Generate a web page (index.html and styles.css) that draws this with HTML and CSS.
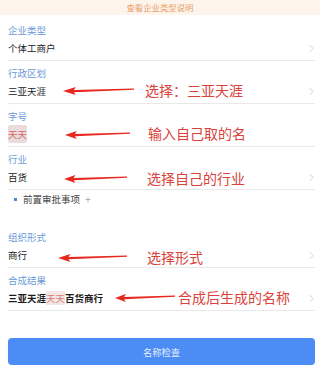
FILE: index.html
```html
<!DOCTYPE html>
<html lang="zh-CN">
<head>
<meta charset="utf-8">
<title>名称检查</title>
<link rel="stylesheet" href="styles.css">
</head>
<body>
<div class="header">查看企业类型说明</div>
<div class="form">
  <div class="field first">
    <div class="label">企业类型</div>
    <div class="value"><span>个体工商户</span><svg class="chev" viewBox="0 0 6 10"><path d="M1 1 L5 5 L1 9" /></svg></div>
  </div>
  <div class="field">
    <div class="label">行政区划</div>
    <div class="value"><span>三亚天涯</span>
      <svg class="arrow a1" viewBox="0 0 72 9" preserveAspectRatio="none"><polygon points="0,5 13,1 11,4 72,2.6 72,3.8 11,6.2 13,9"/></svg>
      <span class="note n1">选择：三亚天涯</span>
      <svg class="chev" viewBox="0 0 6 10"><path d="M1 1 L5 5 L1 9" /></svg></div>
  </div>
  <div class="field">
    <div class="label">字号</div>
    <div class="value"><span class="blur">天天</span>
      <svg class="arrow a2" viewBox="0 0 72 9" preserveAspectRatio="none"><polygon points="0,5 13,1 11,4 72,2.6 72,3.8 11,6.2 13,9"/></svg>
      <span class="note n2">输入自己取的名</span></div>
  </div>
  <div class="field">
    <div class="label">行业</div>
    <div class="value"><span>百货</span>
      <svg class="arrow a3" viewBox="0 0 72 9" preserveAspectRatio="none"><polygon points="0,5 13,1 11,4 72,2.6 72,3.8 11,6.2 13,9"/></svg>
      <span class="note n3">选择自己的行业</span>
      <svg class="chev" viewBox="0 0 6 10"><path d="M1 1 L5 5 L1 9" /></svg></div>
  </div>
  <div class="approval"><span class="dot"></span><span>前置审批事项</span><span class="plus">+</span></div>
  <div class="field gap">
    <div class="label">组织形式</div>
    <div class="value"><span>商行</span>
      <svg class="arrow a4" viewBox="0 0 72 9" preserveAspectRatio="none"><polygon points="0,5 13,1 11,4 72,2.6 72,3.8 11,6.2 13,9"/></svg>
      <span class="note n4">选择形式</span>
      <svg class="chev" viewBox="0 0 6 10"><path d="M1 1 L5 5 L1 9" /></svg></div>
  </div>
  <div class="field">
    <div class="label">合成结果</div>
    <div class="value"><span class="result">三亚天涯<span class="blur2">天天</span>百货商行</span>
      <svg class="arrow a5" viewBox="0 0 72 9" preserveAspectRatio="none"><polygon points="0,5 13,1 11,4 72,2.6 72,3.8 11,6.2 13,9"/></svg>
      <span class="note n5">合成后生成的名称</span>
      <svg class="chev" viewBox="0 0 6 10"><path d="M1 1 L5 5 L1 9" /></svg></div>
  </div>
  <button class="check">名称检查</button>
</div>
</body>
</html>
```
FILE: styles.css
```css
html, body {
  margin: 0;
  padding: 0;
  background: #ffffff;
  font-family: "Noto Sans CJK SC", "Noto Sans", sans-serif;
}
.header {
  height: 15px;
  line-height: 15px;
  background: #fdf4ec;
  color: #e9a068;
  font-size: 8.4px;
  text-align: center;
}
.form {
  padding: 0 5px 0 8px;
  display: flex;
  flex-direction: column;
}
.field {
  padding: 3px 0 3px;
  border-bottom: 1px solid #e9e9e9;
}
.field.first {
  padding-top: 6px;
}
.field.gap {
  margin-top: 17px;
}
.label {
  height: 18px;
  line-height: 18px;
  font-size: 9.5px;
  color: #6b9ad6;
}
.value {
  position: relative;
  height: 18px;
  line-height: 18px;
  font-size: 9.5px;
  color: #222;
  display: flex;
  align-items: center;
  justify-content: space-between;
}
.chev {
  width: 5px;
  height: 9px;
  margin-right: 1px;
  fill: none;
  stroke: #c6c6c6;
  stroke-width: 1;
}
.blur {
  color: #d06a66;
  background: #eadcdc;
  border-radius: 2px;
}
.result {
  font-weight: bold;
  color: #1c1c1c;
}
.blur2 {
  color: #e07a78;
  background: #f3e6e6;
  font-weight: normal;
}
.arrow {
  position: absolute;
  height: 9px;
  fill: #e8281f;
}
.a1 { left: 55px; top: 3.5px; width: 71px; }
.a2 { left: 57px; top: 4.5px; width: 65px; }
.a3 { left: 56px; top: 6px; width: 63px; }
.a4 { left: 50px; top: 6.5px; width: 69px; }
.a5 { left: 107px; top: 3.5px; width: 60px; }
.note {
  position: absolute;
  font-size: 14px;
  line-height: 18px;
  color: #d9423a;
  white-space: nowrap;
}
.n1 { left: 137px; top: -1px; }
.n2 { left: 140px; top: -1px; }
.n3 { left: 139px; top: 1px; }
.n4 { left: 139px; top: 2px; }
.n5 { left: 170px; top: -1px; }
.approval {
  height: 18px;
  display: flex;
  align-items: center;
  font-size: 9.5px;
  color: #444;
  padding-left: 6px;
}
.dot {
  width: 3px;
  height: 3px;
  background: #4f86d6;
  margin-right: 6px;
}
.plus {
  margin-left: 5px;
  color: #8a8a8a;
  font-size: 11px;
  font-weight: 300;
}
.check {
  margin-top: 27px;
  height: 27px;
  width: 307px;
  border: none;
  border-radius: 4px;
  background: #4b8df5;
  color: #e6efff;
  font-family: "Noto Sans CJK SC", sans-serif;
  font-size: 9.3px;
  padding: 0;
}
```
